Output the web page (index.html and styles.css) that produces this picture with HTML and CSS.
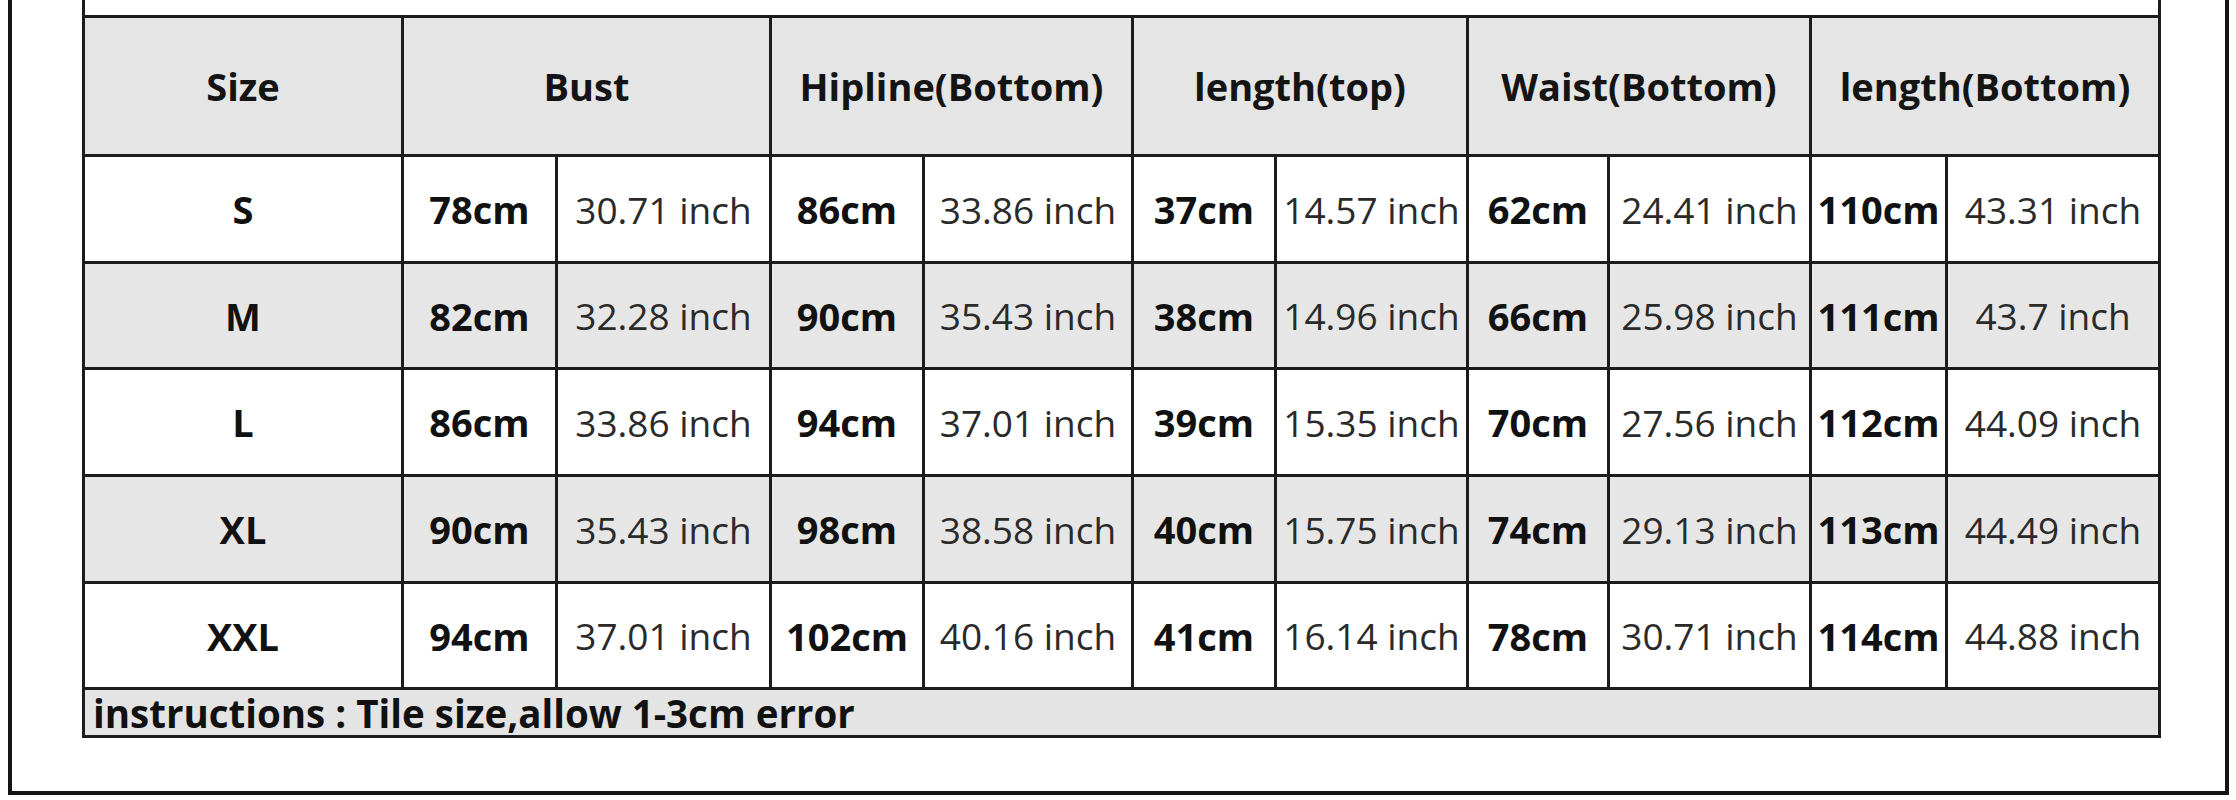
FILE: index.html
```html
<!DOCTYPE html>
<html lang="en">
<head>
<meta charset="utf-8">
<title>Size Chart</title>
<link rel="stylesheet" href="styles.css">
</head>
<body>
<div class="frame">
  <div class="chart">
    <div class="chart-top"></div>
    <div class="grid">
      <div class="cell head">Size</div>
      <div class="cell head wide">Bust</div>
      <div class="cell head wide">Hipline(Bottom)</div>
      <div class="cell head wide">length(top)</div>
      <div class="cell head wide">Waist(Bottom)</div>
      <div class="cell head wide">length(Bottom)</div>

      <div class="cell size">S</div>
      <div class="cell cm">78cm</div><div class="cell in">30.71 inch</div>
      <div class="cell cm">86cm</div><div class="cell in">33.86 inch</div>
      <div class="cell cm">37cm</div><div class="cell in">14.57 inch</div>
      <div class="cell cm">62cm</div><div class="cell in">24.41 inch</div>
      <div class="cell cm">110cm</div><div class="cell in">43.31 inch</div>

      <div class="cell size alt">M</div>
      <div class="cell cm alt">82cm</div><div class="cell in alt">32.28 inch</div>
      <div class="cell cm alt">90cm</div><div class="cell in alt">35.43 inch</div>
      <div class="cell cm alt">38cm</div><div class="cell in alt">14.96 inch</div>
      <div class="cell cm alt">66cm</div><div class="cell in alt">25.98 inch</div>
      <div class="cell cm alt">111cm</div><div class="cell in alt">43.7 inch</div>

      <div class="cell size">L</div>
      <div class="cell cm">86cm</div><div class="cell in">33.86 inch</div>
      <div class="cell cm">94cm</div><div class="cell in">37.01 inch</div>
      <div class="cell cm">39cm</div><div class="cell in">15.35 inch</div>
      <div class="cell cm">70cm</div><div class="cell in">27.56 inch</div>
      <div class="cell cm">112cm</div><div class="cell in">44.09 inch</div>

      <div class="cell size alt">XL</div>
      <div class="cell cm alt">90cm</div><div class="cell in alt">35.43 inch</div>
      <div class="cell cm alt">98cm</div><div class="cell in alt">38.58 inch</div>
      <div class="cell cm alt">40cm</div><div class="cell in alt">15.75 inch</div>
      <div class="cell cm alt">74cm</div><div class="cell in alt">29.13 inch</div>
      <div class="cell cm alt">113cm</div><div class="cell in alt">44.49 inch</div>

      <div class="cell size">XXL</div>
      <div class="cell cm">94cm</div><div class="cell in">37.01 inch</div>
      <div class="cell cm">102cm</div><div class="cell in">40.16 inch</div>
      <div class="cell cm">41cm</div><div class="cell in">16.14 inch</div>
      <div class="cell cm">78cm</div><div class="cell in">30.71 inch</div>
      <div class="cell cm">114cm</div><div class="cell in">44.88 inch</div>

      <div class="cell note">instructions : Tile size,allow 1-3cm error</div>
    </div>
  </div>
</div>
</body>
</html>
```
FILE: styles.css
```css
html, body {
  margin: 0;
  padding: 0;
  background: #ffffff;
}

body {
  font-family: "Open Sans", "Noto Sans", "Liberation Sans", sans-serif;
  color: #1a1a1a;
}

.frame {
  box-sizing: border-box;
  width: 2221px;
  height: 795px;
  margin-left: 8px;
  border-left: 4px solid #141414;
  border-right: 4px solid #141414;
  border-bottom: 4px solid #141414;
  background: #ffffff;
}

.chart {
  width: 2079px;
  margin-left: 70px;
}

.chart-top {
  box-sizing: border-box;
  height: 15px;
  border-left: 3px solid #1c1c1c;
  border-right: 3px solid #1c1c1c;
  background: #ffffff;
}

.grid {
  display: grid;
  grid-template-columns: 316px 151px 211px 150px 206px 140px 189px 138px 199px 133px 210px;
  grid-template-rows: 136px 104px 103px 104px 104px 103px 45px;
  gap: 3px;
  padding: 3px;
  background: #1c1c1c;
}

.cell {
  display: flex;
  align-items: center;
  justify-content: center;
  background: #ffffff;
  white-space: nowrap;
}

.alt {
  background: #e6e6e6;
}

.head {
  background: #e5e5e5;
  font-weight: 700;
  font-size: 38px;
  color: #141414;
}

.wide {
  grid-column: span 2;
}

.size,
.cm {
  font-weight: 700;
  font-size: 38px;
  color: #111111;
}

.in {
  font-weight: 400;
  font-size: 37px;
  color: #2a2a2a;
}

.note {
  grid-column: 1 / -1;
  justify-content: flex-start;
  padding-left: 8px;
  background: #e4e4e4;
  font-weight: 700;
  font-size: 38.5px;
  line-height: 44px;
  color: #111111;
}
```
